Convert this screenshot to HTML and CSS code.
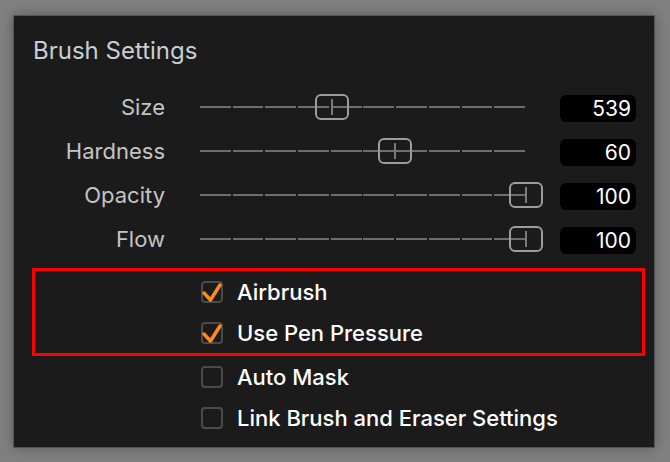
FILE: index.html
```html
<!DOCTYPE html>
<html lang="en">
<head>
    <meta charset="UTF-8">
    <title>Brush Settings</title>
    <link rel="stylesheet" href="styles.css">
</head>
<body>
<div class="panel">
    <div class="title">Brush Settings</div>

    <div class="sliders">
        <div class="row">
            <div class="label">Size</div>
            <div class="slider"><div class="thumb" style="left: 40.4%"></div></div>
            <div class="value">539</div>
        </div>
        <div class="row">
            <div class="label">Hardness</div>
            <div class="slider"><div class="thumb" style="left: 59.6%"></div></div>
            <div class="value">60</div>
        </div>
        <div class="row">
            <div class="label">Opacity</div>
            <div class="slider"><div class="thumb" style="left: 99.7%"></div></div>
            <div class="value">100</div>
        </div>
        <div class="row">
            <div class="label">Flow</div>
            <div class="slider"><div class="thumb" style="left: 99.7%"></div></div>
            <div class="value">100</div>
        </div>
    </div>

    <div class="highlight">
        <div class="check">
            <span class="box on"><svg viewBox="0 0 22 22"><polyline points="3,12 9.5,19 19,4"/></svg></span>
            <span>Airbrush</span>
        </div>
        <div class="check">
            <span class="box on"><svg viewBox="0 0 22 22"><polyline points="3,12 9.5,19 19,4"/></svg></span>
            <span>Use Pen Pressure</span>
        </div>
    </div>
    <div class="checks">
        <div class="check">
            <span class="box"></span>
            <span>Auto Mask</span>
        </div>
        <div class="check">
            <span class="box"></span>
            <span>Link Brush and Eraser Settings</span>
        </div>
    </div>
</div>
</body>
</html>
```

FILE: styles.css
```css
body {
    margin: 0;
    width: 670px;
    height: 462px;
    background: #808080;
    font-family: Inter, "Liberation Sans", sans-serif;
    overflow: hidden;
}

.panel {
    margin: 15px 0 0 13px;
    width: 642px;
    height: 433px;
    box-sizing: border-box;
    background: #1b1b1b;
    border: 1px solid #545454;
    box-shadow: 0 0 12px rgba(0, 0, 0, 0.3);
}

.title {
    padding: 20px 0 0 19px;
    height: 30px;
    line-height: 30px;
    font-size: 24px;
    color: #c9ced3;
}

.sliders {
    margin-top: 19px;
}

.row {
    display: flex;
    align-items: center;
    height: 44px;
}

.label {
    width: 151px;
    text-align: right;
    font-size: 22px;
    color: #c4c4c4;
}

.slider {
    position: relative;
    margin-left: 35px;
    width: 327px;
    height: 2px;
    background: repeating-linear-gradient(to right, #6e6e6e 0 30.7px, transparent 30.7px 32.7px);
}

.thumb {
    position: absolute;
    top: -12px;
    width: 34px;
    height: 26px;
    box-sizing: border-box;
    transform: translateX(-50%);
    border: 2px solid #9c9c9c;
    border-radius: 6px;
}

.thumb::after {
    content: "";
    position: absolute;
    left: 14px;
    top: 3px;
    width: 2px;
    height: 16px;
    background: #7a7a7a;
}

.value {
    margin-left: 33px;
    margin-top: 3px;
    width: 76px;
    height: 27px;
    box-sizing: border-box;
    padding-right: 5px;
    background: #000;
    border-radius: 6px;
    color: #fff;
    font-size: 21px;
    line-height: 27px;
    text-align: right;
}

.highlight {
    margin: 7px 9px 0 18px;
    border: 3px solid #ff0000;
    padding-left: 166px;
}

.checks {
    padding-left: 187px;
}

.check {
    display: flex;
    align-items: center;
    gap: 14px;
    height: 41px;
    font-size: 22px;
    font-weight: 500;
    color: #fff;
}

.box {
    width: 22px;
    height: 22px;
    box-sizing: border-box;
    border: 2px solid #4a4a4a;
    border-radius: 4px;
    position: relative;
}

.box svg {
    position: absolute;
    left: -2px;
    top: -2px;
    width: 22px;
    height: 22px;
    fill: none;
    stroke: #ff8a1c;
    stroke-width: 3.5;
    stroke-linecap: round;
    stroke-linejoin: round;
}
```
